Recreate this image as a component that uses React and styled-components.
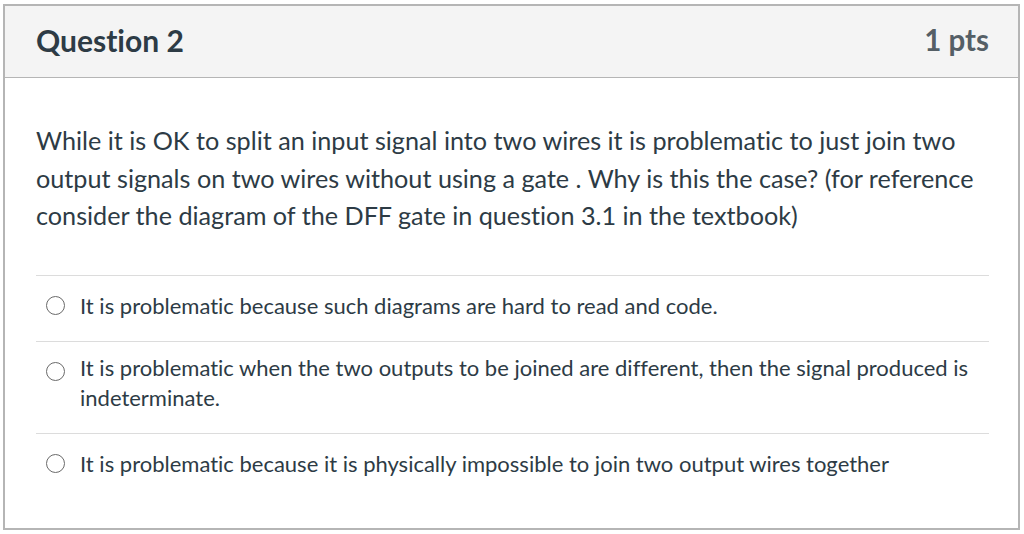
import React from "react";
import styled, { createGlobalStyle } from "styled-components";

const Global = createGlobalStyle`
  html, body { margin: 0; padding: 0; background: #ffffff; }
  body {
    font-family: Lato, "Open Sans", Arial, sans-serif;
    color: #2d3b45;
    font-variant-ligatures: none;
    font-feature-settings: "liga" 0, "clig" 0;
  }
`;

const Page = styled.div`
  padding: 4px 0 0 3px;
`;

const Card = styled.section`
  border: 2px solid #b5b5b5;
  width: 1017px;
  height: 526px;
  box-sizing: border-box;
  display: flex;
  flex-direction: column;
`;

const Header = styled.header`
  height: 72px;
  flex: none;
  box-sizing: border-box;
  background: #f4f4f4;
  border-bottom: 1px solid #b5b5b5;
  display: flex;
  align-items: center;
  justify-content: space-between;
  padding: 0 29px 3px 31px;
`;

const Title = styled.h2`
  margin: 0;
  font-size: 30px;
  line-height: 36px;
  font-weight: 700;
  color: #2d3b45;
`;

const Points = styled.span`
  font-size: 29.5px;
  line-height: 36px;
  font-weight: 700;
  color: #555f66;
`;

const Body = styled.div`
  padding: 44px 29px 0 31px;
`;

const QuestionText = styled.p`
  margin: 0 0 40px;
  font-size: 25.2px;
  line-height: 37.5px;
  color: #2d3b45;
`;

const Answers = styled.div`
  display: flex;
  flex-direction: column;
`;

const Answer = styled.label`
  display: flex;
  align-items: flex-start;
  gap: 15px;
  border-top: 1px solid #dcdcdc;
  padding: ${(p) => (p.$multi ? "11px 0 20px 10px" : "15px 0 20px 10px")};
  font-size: 22px;
  line-height: 30px;
  color: #2d3b45;
`;

const Radio = styled.span`
  flex: none;
  width: 19px;
  height: 19px;
  margin-top: ${(p) => (p.$multi ? "9px" : "5px")};
  border: 1.6px solid #6a6a6a;
  border-radius: 50%;
  box-sizing: border-box;
  background: #fff;
`;

const answers = [
  "It is problematic because such diagrams are hard to read and code.",
  "It is problematic when the two outputs to be joined are different, then the signal produced is indeterminate.",
  "It is problematic because it is physically impossible to join two output wires together",
];

export default function App() {
  return (
    <>
      <Global />
      <Page>
        <Card>
          <Header>
            <Title>Question 2</Title>
            <Points>1 pts</Points>
          </Header>
          <Body>
            <QuestionText>
              While it is OK to split an input signal into two wires it is problematic to just join two
              output signals on two wires without using a gate . Why is this the case? (for reference
              consider the diagram of the DFF gate in question 3.1 in the textbook)
            </QuestionText>
            <Answers>
              {answers.map((a, i) => (
                <Answer key={i} $multi={i === 1}>
                  <Radio $multi={i === 1} />
                  <span>{a}</span>
                </Answer>
              ))}
            </Answers>
          </Body>
        </Card>
      </Page>
    </>
  );
}
